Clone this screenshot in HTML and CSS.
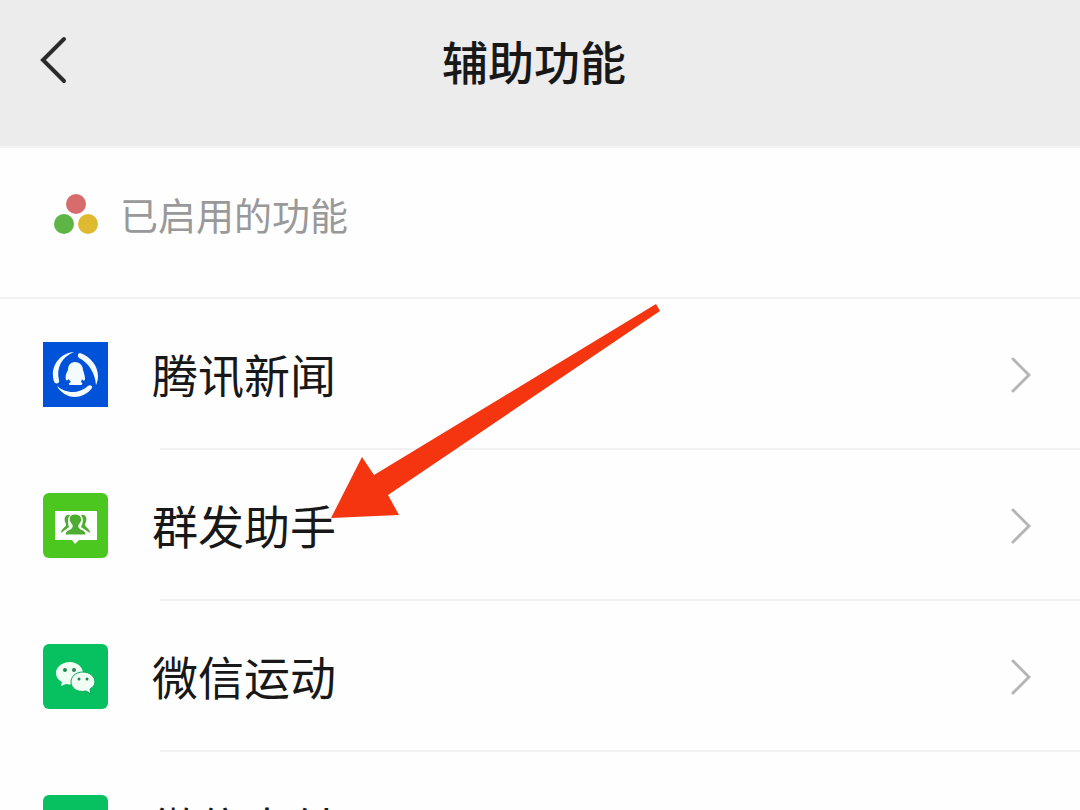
FILE: index.html
```
<!DOCTYPE html>
<html lang="zh-CN">
<head>
  <meta charset="UTF-8">
  <meta name="viewport" content="width=device-width, initial-scale=1">
  <title>辅助功能</title>
  <link rel="stylesheet" href="styles.css">
</head>
<body>
  <header class="navbar">
    <button class="back" type="button" aria-label="返回">
      <svg width="28" height="48" viewBox="0 0 28 48"><path d="M24 3L3 24L24 45"/></svg>
    </button>
    <h1>辅助功能</h1>
  </header>

  <main>
    <div class="section-title">
      <svg width="44" height="40" viewBox="0 0 44 40">
        <circle cx="22" cy="10" r="10" fill="#d86b6b"/>
        <circle cx="10" cy="30" r="10" fill="#5cb544"/>
        <circle cx="34" cy="30" r="10" fill="#dfb930"/>
      </svg>
      <h2>已启用的功能</h2>
    </div>

    <ul class="features">
      <li>
        <a class="feature" href="#news">
          <svg class="icon" viewBox="0 0 65 65">
            <rect width="65" height="65" fill="#0052d9"/>
            <g fill="#f4fbff">
              <path d="M31 10C18 11 9 22 10 34C10 37 11 40 12 41C14 42 17 41 16 38C13 27 18 15 31 10Z"/>
              <path d="M37 11C47 14 55 24 55 34C55 38 54 41 53 43C52 31 46 21 36 16C34 14 35 11 37 11Z"/>
              <path d="M14 44C22 51 35 53 45 44C47 42 50 44 49 46C45 52 37 55 32 55C24 55 17 50 14 44Z"/>
              <path d="M32 20C27 20 25 24 25 28C23 31 22 35 23 38C24 39 25 38 26 37C26 38 27 39 28 40C25 41 25 43 28 43H37C40 43 40 41 38 40L39 37C40 39 42 39 42 37C42 34 41 31 40 28C40 24 37 20 32 20Z"/>
            </g>
          </svg>
          <span class="name">腾讯新闻</span>
          <svg class="chevron" viewBox="0 0 20 36"><path d="M2 2L18 18L2 34"/></svg>
        </a>
      </li>
      <li>
        <a class="feature" href="#broadcast">
          <svg class="icon" viewBox="0 0 65 65">
            <rect width="65" height="65" rx="6" fill="#4cc71f"/>
            <path d="M12 18H54V47H36L32 51L29 47H12Z" fill="#fff"/>
            <g fill="#4cad31">
              <path d="M27 22C22 21 20 26 23 31C24 34 18 35 18 40L26 34C25 30 24 26 27 22ZM38 22C43 21 45 26 42 31C41 34 47 35 47 40L38 34C40 30 41 26 38 22Z"/>
              <path d="M32 21C27 21 25 25 27 29C28 31 30 32 29 34C29 37 22 36 22 42H43C43 36 36 37 36 34C35 32 37 31 38 29C40 25 37 21 32 21Z" stroke="#fff" stroke-width="1"/>
            </g>
          </svg>
          <span class="name">群发助手</span>
          <svg class="chevron" viewBox="0 0 20 36"><path d="M2 2L18 18L2 34"/></svg>
        </a>
      </li>
      <li>
        <a class="feature" href="#sport">
          <svg class="icon" viewBox="0 0 65 65">
            <rect width="65" height="65" rx="6" fill="#07c160"/>
            <path d="M27 18C19 18 13 23 13 29C13 33 15 36 19 38L18 42L23 40C33 42 40 36 40 29C40 23 34 18 27 18Z" fill="#effff4"/>
            <path d="M40 28C32 28 28 33 28 38C28 44 34 49 43 47L48 50L47 45C50 43 52 41 52 38C52 32 46 28 40 28Z" fill="#effff4" stroke="#07a858" stroke-width="1"/>
            <g fill="#238653">
              <circle cx="22" cy="26" r="2"/><circle cx="31" cy="26" r="2"/>
              <circle cx="36" cy="35" r="1.5"/><circle cx="44" cy="35" r="1.5"/>
            </g>
          </svg>
          <span class="name">微信运动</span>
          <svg class="chevron" viewBox="0 0 20 36"><path d="M2 2L18 18L2 34"/></svg>
        </a>
      </li>
      <li>
        <a class="feature" href="#pay">
          <svg class="icon" viewBox="0 0 65 65">
            <rect width="65" height="65" rx="6" fill="#07c160"/>
            <path d="M32 17C21 17 13 24 13 32C13 37 15 40 19 43L18 49L24 46C39 50 52 42 52 32L27 41L22 31L28 34L47 22C43 19 38 17 32 17Z" fill="#fff"/>
          </svg>
          <span class="name">微信支付</span>
          <svg class="chevron" viewBox="0 0 20 36"><path d="M2 2L18 18L2 34"/></svg>
        </a>
      </li>
    </ul>

    <svg class="pointer" width="330" height="216" viewBox="0 0 330 216" aria-hidden="true">
      <path d="M325 1L329 8L57 192L68 212L0 215L31 154L43 172Z"/>
    </svg>
  </main>
</body>
</html>
```

FILE: styles.css
```
* { box-sizing: border-box; }

body {
  margin: 0;
  height: 100vh;
  overflow: hidden;
  background: #fefefe;
  color: #181818;
  font-family: "Noto Sans CJK SC", sans-serif;
}

h1, h2 { margin: 0; }

.navbar {
  display: grid;
  grid-template-columns: 80px 1fr 80px;
  align-items: center;
  padding: 24px 12px 48px 0;
  background: #ececec;
  border-bottom: 2px solid #f3f3f3;
}
.navbar h1 {
  font-size: 46px;
  line-height: 72px;
  padding-bottom: 2px;
  font-weight: 500;
  text-align: center;
}

.back {
  display: flex;
  padding: 0 0 2px 40px;
  border: 0;
  background: none;
  cursor: pointer;
}
.back path {
  fill: none;
  stroke: #2b2b2b;
  stroke-width: 4;
  stroke-linecap: round;
}

main { position: relative; }

.section-title {
  display: flex;
  align-items: center;
  gap: 22px;
  padding: 35px 54px 52px;
  border-bottom: 2px solid #f1f1f1;
}
.section-title h2 {
  color: #999;
  font-size: 38px;
  line-height: 62px;
  font-weight: 400;
}

.features {
  margin: 0;
  padding: 0;
  list-style: none;
}
.features li + li::before {
  content: "";
  display: block;
  height: 2px;
  margin-left: 160px;
  background: #f1f1f1;
}

.feature {
  display: flex;
  align-items: center;
  gap: 44px;
  height: 149px;
  padding: 2px 49px 0 43px;
  color: inherit;
  text-decoration: none;
}
.icon {
  flex: none;
  width: 65px;
  height: 65px;
}
.name {
  flex: 1;
  padding-bottom: 4px;
  font-size: 46px;
  line-height: 68px;
}
.chevron {
  flex: none;
  width: 20px;
  height: 36px;
}
.chevron path {
  fill: none;
  stroke: #b5b5b5;
  stroke-width: 3;
  stroke-linecap: round;
}

.pointer {
  position: absolute;
  top: 155px;
  left: 331px;
  pointer-events: none;
}
.pointer path { fill: #f53510; }
```
